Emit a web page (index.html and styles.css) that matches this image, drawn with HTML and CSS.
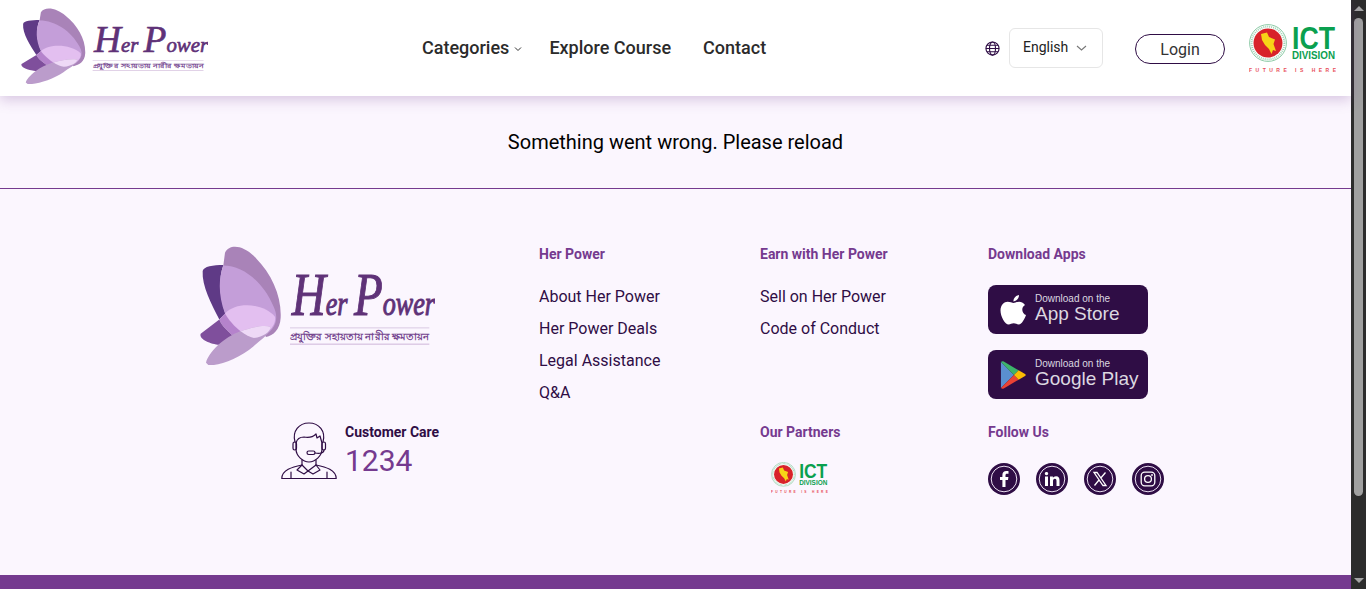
FILE: index.html
```html
<!DOCTYPE html>
<html lang="en">
<head>
    <meta charset="UTF-8">
    <meta name="viewport" content="width=device-width, initial-scale=1.0">
    <title>Her Power</title>
    <link rel="stylesheet" href="styles.css">
</head>
<body>
    <svg class="defs" width="0" height="0">
        <symbol id="butterfly" viewBox="60 52 705 353" preserveAspectRatio="none">
            <path fill="#a983b8" d="M135 72C150 42 195 52 228 88C275 135 305 200 302 265C300 300 280 318 258 322L130 110Z"/>
            <path fill="#5f3a86" d="M130 108C100 108 70 112 68 126C65 170 95 225 118 270L136 252C120 200 115 150 130 108Z"/>
            <path fill="#c49ed9" d="M130 110C190 110 250 160 280 230C300 270 285 305 240 325C200 320 150 280 135 252C115 200 115 150 130 110Z"/>
            <path fill="#e3bff0" d="M135 252C170 215 250 222 285 262C290 290 260 318 222 325C190 320 150 285 135 252Z"/>
            <path fill="#b583cc" d="M118 270L135 252C145 270 165 292 182 305L160 320C145 305 125 290 118 270Z"/>
            <path fill="#7f4f9c" d="M118 270L62 312C55 330 100 346 125 345C140 335 155 325 160 320C145 305 125 290 118 270Z"/>
            <path fill="#bb9ccb" d="M78 398C85 370 130 322 182 305C210 295 250 285 272 292C265 320 240 330 220 350C180 385 110 410 85 405Z"/>
            <path fill="#eed9f6" d="M182 305C210 295 250 285 272 292C270 308 250 320 222 325C208 322 195 315 182 305Z"/>
            <rect x="330" y="294" width="418" height="2" fill="#c9b3d6"/>
            <rect x="330" y="342" width="418" height="2" fill="#b896c8"/>
        </symbol>
        <symbol id="ict-seal" viewBox="0 0 38 38">
            <circle cx="19" cy="19" r="18.400" fill="#fff" stroke="#8fcba8" stroke-width="1"/>
            <circle cx="19" cy="19" r="16.400" fill="none" stroke="#9fd3b5" stroke-width="2" stroke-dasharray="1 1"/>
            <circle cx="19" cy="19" r="14.500" fill="#d8232a"/>
            <path fill="#f7d417" d="M12 10L18 8.500L20 13L26 15.500L24.500 20L27 27L24 26L22.500 30L20 25L16 21L13 16Z"/>
        </symbol>
    </svg>

    <div class="page">
        <div class="content">
            <div class="header">
                <svg class="header-logo" viewBox="60 52 705 353" preserveAspectRatio="none">
                    <use href="#butterfly" x="60" y="52" width="705" height="353"/>
                    <text x="335" y="258" class="logo-script" textLength="430" lengthAdjust="spacingAndGlyphs"><tspan class="logo-cap">H</tspan>er <tspan class="logo-cap">P</tspan>ower</text>
                    <text x="330" y="330" class="logo-tag" textLength="418" lengthAdjust="spacingAndGlyphs">প্রযুক্তির সহায়তায় নারীর ক্ষমতায়ন</text>
                </svg>
                <div class="nav-container">
                    <a href="#" class="nav-cat">Categories
                        <svg class="caret-small" viewBox="0 0 8 6"><path d="M1 1.500L4 4.500L7 1.500" fill="none" stroke="#333" stroke-width="1"/></svg>
                    </a>
                    <a href="#">Explore Course</a>
                    <a href="#">Contact</a>
                </div>
                <div class="header-right">
                    <svg class="globe" viewBox="0 0 16 16" fill="none" stroke="#2f0d45" stroke-width="1.200">
                        <circle cx="8" cy="8" r="7"/>
                        <ellipse cx="8" cy="8" rx="3.200" ry="7"/>
                        <path d="M1 8H15M2 4.500H14M2 11.500H14"/>
                    </svg>
                    <div class="lang-select"><span>English</span>
                        <svg class="caret" viewBox="0 0 11 6"><path d="M1 1L5.500 5L10 1" fill="none" stroke="#777" stroke-width="1.100"/></svg>
                    </div>
                    <a href="#" class="login-btn">Login</a>
                    <svg class="ict-logo" viewBox="0 0 87 49">
                        <use href="#ict-seal" width="38" height="38"/>
                        <text x="43" y="25" class="ict-big" textLength="43" lengthAdjust="spacingAndGlyphs">ICT</text>
                        <text x="43" y="35" class="ict-small" textLength="43" lengthAdjust="spacingAndGlyphs">DIVISION</text>
                        <text x="0" y="48" class="ict-tag" textLength="87">FUTURE IS HERE</text>
                    </svg>
                </div>
            </div>

            <div class="message">Something went wrong. Please reload</div>

            <div class="footer">
                <div class="footer-grid">
                    <svg class="footer-logo" viewBox="60 52 705 353" preserveAspectRatio="none">
                        <use href="#butterfly" x="60" y="52" width="705" height="353"/>
                        <text x="335" y="258" class="logo-script" textLength="430" lengthAdjust="spacingAndGlyphs"><tspan class="logo-cap">H</tspan>er <tspan class="logo-cap">P</tspan>ower</text>
                        <text x="330" y="330" class="logo-tag" textLength="418" lengthAdjust="spacingAndGlyphs">প্রযুক্তির সহায়তায় নারীর ক্ষমতায়ন</text>
                    </svg>
                    <div class="footer-col">
                        <h4>Her Power</h4>
                        <a href="#">About Her Power</a>
                        <a href="#">Her Power Deals</a>
                        <a href="#">Legal Assistance</a>
                        <a href="#">Q&amp;A</a>
                    </div>
                    <div class="footer-col">
                        <h4>Earn with Her Power</h4>
                        <a href="#">Sell on Her Power</a>
                        <a href="#">Code of Conduct</a>
                    </div>
                    <div class="footer-col">
                        <h4>Download Apps</h4>
                        <div class="badges">
                            <a href="#" class="store-badge">
                                <svg class="store-icon" viewBox="0 0 26 32"><path fill="#fff" d="M19 1C19.200 3.800 16.800 7.200 13.500 7.400C13 4.500 15.800 1.300 19 1ZM13.600 9C15 9 16.800 7.700 19.200 7.700C21 7.700 23.400 8.700 25 11C21 13.300 21.500 19.300 26 21C24.800 24.500 21.800 30.500 18.800 30.500C17 30.500 16 29.300 13.800 29.300C11.500 29.300 10.500 30.500 8.700 30.500C5 30.500 0.500 22.500 0.500 16.500C0.500 10.800 4.200 7.800 7.600 7.800C10 7.800 12.200 9 13.600 9Z"/></svg>
                                <span class="store-text"><small>Download on the</small>App Store</span>
                            </a>
                            <a href="#" class="store-badge">
                                <svg class="store-icon play" viewBox="0 0 28 32">
                                    <path fill="#5a8fd0" d="M1 2V30L15 16Z"/>
                                    <path fill="#3db36b" d="M1 2C2 1 3 1 4 1.500L20 11L15 16Z"/>
                                    <path fill="#ea4335" d="M1 30C2 31 3 31 4 30.500L20 21L15 16Z"/>
                                    <path fill="#fbbc04" d="M20 11L27 15C28 15.700 28 16.300 27 17L20 21L15 16Z"/>
                                </svg>
                                <span class="store-text"><small>Download on the</small>Google Play</span>
                            </a>
                        </div>
                    </div>

                    <div class="care">
                        <svg class="care-icon" viewBox="0 0 56 58" fill="none" stroke="#2f0d45" stroke-width="1.200" stroke-linecap="round" stroke-linejoin="round">
                            <path d="M14 20C11 9 18 1 28 1C38 1 45 9 42 20"/>
                            <path d="M15 21C16 17 19 15 23 15C28 16 32 15 35 12L36 16L39 14L41 21V27C41 34 34 40 28 40C22 40 15 34 15 27Z"/>
                            <rect x="12" y="20" width="3.500" height="8" rx="1.700"/>
                            <rect x="41" y="20" width="3.500" height="8" rx="1.700"/>
                            <path d="M43 28C43 31 39 32 34 31"/>
                            <rect x="26" y="29" width="8" height="3.500" rx="1.700"/>
                            <path d="M21 38V43L27 49L35 43V38"/>
                            <path d="M21 43C11 45 1 48 0.800 56.500H55.200C55 48 45 45 35 43"/>
                            <path d="M21 43L16 48L23 52L27 49L32 52L39 48L35 43"/>
                            <path d="M10 50V56.500M46 50V56.500"/>
                        </svg>
                        <div>
                            <div class="care-label">Customer Care</div>
                            <div class="care-number">1234</div>
                        </div>
                    </div>
                    <div></div>
                    <div class="footer-col">
                        <h4>Our Partners</h4>
                        <svg class="partner-logo" viewBox="0 0 87 49">
                            <use href="#ict-seal" width="38" height="38"/>
                            <text x="43" y="25" class="ict-big" textLength="43" lengthAdjust="spacingAndGlyphs">ICT</text>
                            <text x="43" y="35" class="ict-small" textLength="43" lengthAdjust="spacingAndGlyphs">DIVISION</text>
                            <text x="0" y="48" class="ict-tag" textLength="87">FUTURE IS HERE</text>
                        </svg>
                    </div>
                    <div class="footer-col">
                        <h4>Follow Us</h4>
                        <div class="socials">
                            <a href="#" class="social"><svg viewBox="0 0 32 32"><circle class="ring" cx="16" cy="16" r="12.800"/><path class="glyph" d="M17.500 24V17H20L20.400 14H17.500V12.300C17.500 11.400 17.800 10.800 19 10.800H20.500V8.200C20.200 8.200 19.300 8.100 18.200 8.100C16 8.100 14.400 9.500 14.400 12V14H12V17H14.400V24Z"/></svg></a>
                            <a href="#" class="social"><svg viewBox="0 0 32 32"><circle class="ring" cx="16" cy="16" r="12.800"/><path class="glyph" d="M9 13.500H12V23H9ZM10.500 9C11.500 9 12.200 9.700 12.200 10.600C12.200 11.500 11.500 12.200 10.500 12.200C9.500 12.200 8.800 11.500 8.800 10.600C8.800 9.700 9.500 9 10.500 9ZM14 13.500H16.900V14.800C17.400 14 18.500 13.200 20 13.200C22.800 13.200 23.500 15 23.500 17.500V23H20.500V18.200C20.500 17 20.300 15.800 18.900 15.800C17.500 15.800 17 16.900 17 18.200V23H14Z"/></svg></a>
                            <a href="#" class="social"><svg viewBox="0 0 32 32"><circle class="ring" cx="16" cy="16" r="12.800"/><path class="stroke" d="M10 9.500H13L22 22.500H19ZM21.500 9.500L16.800 15M15 17L10.500 22.500"/></svg></a>
                            <a href="#" class="social"><svg viewBox="0 0 32 32"><circle class="ring" cx="16" cy="16" r="12.800"/><rect class="stroke" x="9.200" y="9.200" width="13.600" height="13.600" rx="3.500"/><circle class="stroke" cx="16" cy="16" r="3.400"/><circle class="glyph" cx="20" cy="12" r="0.900"/></svg></a>
                        </div>
                    </div>
                </div>
            </div>
            <div class="bottom-bar"></div>
        </div>
        <div class="scrollbar">
            <span class="arrow-up"></span>
            <div class="scroll-track"><div class="scroll-thumb"></div></div>
            <span class="arrow-down"></span>
        </div>
    </div>
</body>
</html>
```

FILE: styles.css
```css
html, body {
    margin: 0;
    padding: 0;
    height: 100%;
    overflow: hidden;
}
body {
    background-color: #fbf6fe;
    font-family: Roboto, Arial, sans-serif;
    color: #2f0d45;
}
a {
    color: inherit;
    text-decoration: none;
}
.defs {
    position: absolute;
}
.page {
    display: flex;
    height: 589px;
}
.content {
    flex: 1;
    min-width: 0;
    display: flex;
    flex-direction: column;
}

/* header */
.header {
    height: 96px;
    flex-shrink: 0;
    display: flex;
    align-items: center;
    padding: 0 15px 0 21px;
    background-color: #fff;
    box-shadow: 0 4px 12px rgba(117, 58, 143, 0.25);
    position: relative;
}
.header-logo {
    width: 187px;
    height: 76px;
    flex-shrink: 0;
    margin-top: -4px;
}
.nav-container {
    display: flex;
    align-items: center;
    gap: 32px;
    margin: -2px 0 0 214px;
    font-size: 18px;
    font-weight: 500;
    color: #2b2b2b;
}
.nav-cat {
    display: flex;
    align-items: center;
    gap: 5px;
    margin-right: -5px;
}
.caret-small {
    width: 8px;
    height: 6px;
    margin-top: 3px;
}
.header-right {
    margin-left: auto;
    display: flex;
    align-items: center;
}
.globe {
    width: 15px;
    height: 15px;
    margin-right: 9px;
}
.lang-select {
    width: 94px;
    height: 40px;
    box-sizing: border-box;
    display: flex;
    align-items: center;
    justify-content: space-between;
    padding: 0 15px 2px 13px;
    border: 1px solid #e6e6e6;
    border-radius: 6px;
    font-size: 14px;
    color: #222;
}
.caret {
    width: 11px;
    height: 6px;
    margin-top: 2px;
}
.login-btn {
    width: 90px;
    height: 30px;
    box-sizing: border-box;
    margin: 2px 24px 0 32px;
    border: 1px solid #2f0d45;
    border-radius: 15px;
    text-align: center;
    line-height: 30px;
    font-size: 16px;
    color: #333;
}
.ict-logo {
    width: 87px;
    height: 49px;
    margin-top: 1px;
}
.ict-big {
    font: 700 32px "Liberation Sans", Arial, sans-serif;
    fill: #0aa04f;
}
.ict-small {
    font: 700 11px "Liberation Sans", Arial, sans-serif;
    fill: #0aa04f;
}
.ict-tag {
    font: 700 5px "Liberation Sans", Arial, sans-serif;
    fill: #e8505b;
}
.logo-script {
    font: italic 400 100px "Liberation Serif", serif;
    fill: #5f3278;
    stroke: #5f3278;
    stroke-width: 3;
}
.logo-cap {
    font-size: 180px;
}
.logo-tag {
    font: 700 30px "Noto Sans", "Liberation Sans", sans-serif;
    fill: #75458f;
}

/* message */
.message {
    height: 93px;
    flex-shrink: 0;
    box-sizing: border-box;
    padding-top: 34px;
    text-align: center;
    font-size: 20px;
    line-height: 24px;
    color: #000;
    border-bottom: 1px solid #753a8f;
}

/* footer */
.footer {
    flex: 1;
    min-height: 0;
    padding: 57px 0 0 200px;
}
.footer-grid {
    display: grid;
    grid-template-columns: 339px 221px 228px auto;
    grid-template-rows: 178px auto;
}
.footer-logo {
    width: 235px;
    height: 119px;
}
.footer-col h4 {
    margin: 0 0 19px;
    font-size: 14px;
    line-height: 16px;
    font-weight: 700;
    color: #753a8f;
}
.footer-col > a {
    display: block;
    font-size: 16px;
    line-height: 32px;
}
.badges {
    display: flex;
    flex-direction: column;
    gap: 16px;
    margin-top: 23px;
}
.store-badge {
    width: 160px;
    height: 49px;
    box-sizing: border-box;
    display: flex;
    align-items: center;
    gap: 9px;
    padding-left: 12px;
    background-color: #2f0d45;
    border-radius: 8px;
    color: #dcd8e0;
    font-family: "Liberation Sans", Arial, sans-serif;
}
.store-icon {
    width: 26px;
    height: 32px;
    flex-shrink: 0;
}
.store-text {
    font-size: 19px;
    line-height: 20px;
    padding-bottom: 2px;
}
.store-text small {
    display: block;
    font-size: 10px;
    line-height: 10px;
}
.care {
    display: flex;
    gap: 8px;
    padding: 0 0 0 81px;
}
.care-icon {
    width: 56px;
    height: 58px;
    margin-top: -2px;
}
.care-label {
    font-size: 14px;
    line-height: 16px;
    font-weight: 700;
}
.care-number {
    font-size: 30px;
    line-height: 34px;
    margin-top: 4px;
    color: #753a8f;
}
.partner-logo {
    width: 57px;
    height: 32px;
    display: block;
    margin: 22px 0 0 11px;
}
.socials {
    display: flex;
    gap: 16px;
    margin-top: 23px;
}
.social {
    width: 32px;
    height: 32px;
    border-radius: 50%;
    background-color: #2f0d45;
}
.social svg {
    display: block;
    width: 32px;
    height: 32px;
}
.ring {
    fill: none;
    stroke: #e9dff0;
    stroke-width: 1;
}
.glyph {
    fill: #fff;
}
.stroke {
    fill: none;
    stroke: #fff;
    stroke-width: 1.300;
}
.bottom-bar {
    height: 14px;
    flex-shrink: 0;
    background-color: #753a8f;
}

/* scrollbar */
.scrollbar {
    width: 15px;
    flex-shrink: 0;
    display: flex;
    flex-direction: column;
    align-items: center;
    background-color: #2c2c2c;
}
.arrow-up,
.arrow-down {
    width: 0;
    height: 0;
    margin: 6px 0;
    border-left: 5px solid transparent;
    border-right: 5px solid transparent;
}
.arrow-up {
    border-bottom: 5px solid #a5a5a5;
}
.arrow-down {
    border-top: 5px solid #a5a5a5;
}
.scroll-track {
    flex: 1;
    width: 100%;
}
.scroll-thumb {
    width: 9px;
    height: 478px;
    margin: 1px auto 0;
    background-color: #a0a0a0;
    border-radius: 5px;
}
```
